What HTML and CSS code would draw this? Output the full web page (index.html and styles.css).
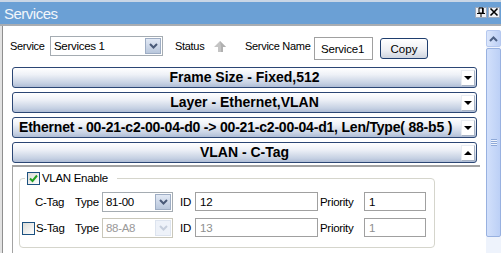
FILE: index.html
```html
<!DOCTYPE html>
<html lang="en">
<head>
    <meta charset="UTF-8">
    <title>Services</title>
    <link rel="stylesheet" href="styles.css">
</head>
<body>
    <div class="window">
        <div class="titlebar">
            <span class="title">Services</span>
            <div class="title-buttons">
                <span class="tbtn">
                    <svg width="10" height="10" viewBox="0 0 10 10">
                        <path d="M3 1h4v5H3z" fill="none" stroke="#000" stroke-width="1"/>
                        <path d="M6 1h1.5v5H6z" fill="#000"/>
                        <path d="M1 6.5h8" stroke="#000" stroke-width="1"/>
                        <path d="M5 7v3" stroke="#000" stroke-width="1"/>
                    </svg>
                </span>
                <span class="tbtn">
                    <svg width="10" height="10" viewBox="0 0 10 10">
                        <path d="M1.5 1.5l7 7M8.5 1.5l-7 7" stroke="#000" stroke-width="1.6"/>
                    </svg>
                </span>
            </div>
        </div>

        <div class="main">
            <div class="content">
                <div class="toolbar">
                    <span class="lbl lbl-service">Service</span>
                    <div class="combo combo-service">
                        <span class="combo-text">Services 1</span>
                        <span class="combo-btn">
                            <svg width="9" height="6" viewBox="0 0 9 6"><path d="M1 1l3.5 3.5L8 1" fill="none" stroke="currentColor" stroke-width="2"/></svg>
                        </span>
                    </div>
                    <span class="lbl lbl-status">Status</span>
                    <svg class="status-icon" width="13" height="12" viewBox="0 0 13 12">
                        <path d="M6 0L12 6H9V11H4V6H0z" fill="#c4c4c4"/>
                        <path d="M6 0L12 6H9V11H7V5z" fill="#b0b0b0"/>
                    </svg>
                    <span class="lbl lbl-name">Service Name</span>
                    <input class="field field-name" type="text" value="Service1">
                    <button class="btn-copy" type="button">Copy</button>
                </div>

                <div class="sections">
                    <div class="section-head">
                        <span class="section-title">Frame Size - Fixed,512</span>
                        <span class="section-arrow"><i class="tri-down"></i></span>
                    </div>
                    <div class="section-head">
                        <span class="section-title">Layer - Ethernet,VLAN</span>
                        <span class="section-arrow"><i class="tri-down"></i></span>
                    </div>
                    <div class="section-head">
                        <span class="section-title section-title-long">Ethernet - 00-21-c2-00-04-d0 -&gt; 00-21-c2-00-04-d1, Len/Type( 88-b5 )</span>
                        <span class="section-arrow"><i class="tri-down"></i></span>
                    </div>
                    <div class="section-head">
                        <span class="section-title">VLAN - C-Tag</span>
                        <span class="section-arrow"><i class="tri-up"></i></span>
                    </div>

                    <div class="section-body">
                        <fieldset class="group">
                            <legend class="group-legend">
                                <span class="check checked">
                                    <svg width="11" height="11" viewBox="0 0 11 11"><path d="M2 5.5l2.5 2.5L9 2.5" fill="none" stroke="#21a121" stroke-width="2"/></svg>
                                </span>
                                <span>VLAN Enable</span>
                            </legend>

                            <div class="tag-row">
                                <span></span>
                                <span class="lbl">C-Tag</span>
                                <span class="lbl">Type</span>
                                <div class="combo combo-type">
                                    <span class="combo-text">81-00</span>
                                    <span class="combo-btn">
                                        <svg width="9" height="6" viewBox="0 0 9 6"><path d="M1 1l3.5 3.5L8 1" fill="none" stroke="currentColor" stroke-width="2"/></svg>
                                    </span>
                                </div>
                                <span class="lbl lbl-id">ID</span>
                                <input class="field" type="text" value="12">
                                <span class="lbl lbl-prio">Priority</span>
                                <input class="field" type="text" value="1">
                            </div>

                            <div class="tag-row">
                                <span class="check"></span>
                                <span class="lbl lbl-stag">S-Tag</span>
                                <span class="lbl">Type</span>
                                <div class="combo combo-type disabled">
                                    <span class="combo-text">88-A8</span>
                                    <span class="combo-btn">
                                        <svg width="9" height="6" viewBox="0 0 9 6"><path d="M1 1l3.5 3.5L8 1" fill="none" stroke="currentColor" stroke-width="2"/></svg>
                                    </span>
                                </div>
                                <span class="lbl lbl-id">ID</span>
                                <input class="field" type="text" value="13" disabled>
                                <span class="lbl lbl-prio">Priority</span>
                                <input class="field" type="text" value="1" disabled>
                            </div>
                        </fieldset>
                    </div>
                </div>
            </div>

            <div class="scrollbar">
                <div class="sb-up">
                    <svg width="9" height="6" viewBox="0 0 9 6"><path d="M1 5l3.5-3.5L8 5" fill="none" stroke="#4d6185" stroke-width="2"/></svg>
                </div>
                <div class="sb-thumb"><span class="grip"></span></div>
            </div>
        </div>
    </div>
</body>
</html>
```

FILE: styles.css
```css
/* XP style docked "Services" panel */
* {
    box-sizing: border-box;
}

body {
    margin: 0;
    font-family: 'Liberation Sans', Arial, sans-serif;
    font-size: 11px;
    letter-spacing: -0.3px;
    color: #000;
    background-color: #fff;
    overflow: hidden;
}

.window {
    width: 501px;
    height: 253px;
    display: flex;
    flex-direction: column;
}

/* title bar */
.titlebar {
    height: 26px;
    flex-shrink: 0;
    display: flex;
    align-items: center;
    justify-content: space-between;
    background-color: #6ba0d5;
    border-top: 2px solid #c9d6e6;
    border-bottom: 2px solid #a9adb2;
    padding: 0 1px 0 4px;
}

.title {
    color: #f2f6fb;
    font-size: 15px;
    letter-spacing: -0.5px;
    margin-top: 1px;
}

.title-buttons {
    display: flex;
    gap: 1px;
    margin-bottom: 2px;
}

.tbtn {
    width: 12px;
    height: 11px;
    display: flex;
    align-items: center;
    justify-content: center;
    background-color: #eef1f6;
    border: 1px solid #9aa9be;
}

/* main area */
.main {
    flex: 1;
    display: flex;
    border-left: 2px solid #e2e2e2;
    min-height: 0;
}

.content {
    flex: 1;
    border-left: 1px solid #8f8f8f;
}

.lbl {
    line-height: 20px;
    white-space: nowrap;
}

.toolbar {
    display: flex;
    align-items: flex-start;
    margin-top: 10px;
    padding-left: 7px;
    height: 24px;
}

.lbl-service { width: 40px; }
.lbl-status { margin-left: 12px; width: 39px; }
.lbl-name { margin-left: 18px; width: 62px; }

.status-icon {
    margin-top: 5px;
}

/* combo box */
.combo {
    display: flex;
    height: 20px;
    border: 1px solid #a5acb2;
    background-color: #fff;
    padding: 1px;
}

.combo-service { width: 113px; }
.combo-type { width: 71px; }

.combo-text {
    flex: 1;
    line-height: 16px;
    padding-left: 2px;
    font-size: 11.5px;
}

.combo-btn {
    width: 16px;
    display: flex;
    align-items: center;
    justify-content: center;
    color: #4a5a78;
    background: linear-gradient(#e2e9f5, #b9c7dc);
    border: 1px solid #9eadc4;
}

.combo.disabled {
    border-color: #c9c7ba;
}

.combo.disabled .combo-text {
    color: #9a9a9a;
}

.combo.disabled .combo-btn {
    color: #c6cedc;
    background: #eef2f9;
    border-color: #dde4ef;
}

.field {
    height: 19px;
    border: 1px solid #a0a0a0;
    padding: 0 0 0 4px;
    font-family: inherit;
    font-size: 11.5px;
    letter-spacing: -0.2px;
    color: #000;
    background-color: #fff;
    outline: none;
}

.field:disabled {
    color: #8e8e8e;
    background-color: #fff;
}

.field-name {
    width: 59px;
    height: 23px;
    margin-left: 7px;
    margin-top: 1px;
    padding-left: 6px;
}

.btn-copy {
    width: 48px;
    height: 21px;
    margin-left: 7px;
    margin-top: 2px;
    font-family: inherit;
    font-size: 11.5px;
    border: 1px solid #1f3e6e;
    border-radius: 3px;
    background: linear-gradient(#ffffff, #eceef3 60%, #cfd5df);
    padding: 0;
}

/* accordion headers */
.sections {
    display: flex;
    flex-direction: column;
    gap: 4px;
    margin-top: 7px;
    padding: 0 9px;
}

.section-head {
    height: 21px;
    display: grid;
    align-items: center;
    border: 1px solid #2b4674;
    border-radius: 3px;
    background: linear-gradient(#ffffff, #eef1f7 35%, #c6d1e3 80%, #afbdd6);
    overflow: hidden;
}

.section-title,
.section-arrow {
    grid-area: 1 / 1;
}

.section-title {
    font-size: 14px;
    font-weight: bold;
    letter-spacing: 0;
    text-align: center;
    white-space: nowrap;
    padding: 0 6px;
    line-height: 19px;
}

.section-title-long {
    text-align: left;
    letter-spacing: -0.2px;
}

.section-arrow {
    justify-self: end;
    width: 14px;
    height: 16px;
    margin-right: 1px;
    display: flex;
    align-items: center;
    justify-content: center;
    background-color: #fff;
    border: 1px solid #e8ecf2;
    border-right-color: #a7b2c4;
    border-bottom-color: #a7b2c4;
}

.tri-down,
.tri-up {
    width: 0;
    height: 0;
    border-left: 4px solid transparent;
    border-right: 4px solid transparent;
}

.tri-down { border-top: 4px solid #000; }
.tri-up { border-bottom: 4px solid #000; }

/* VLAN content */
.section-body {
    margin-top: -2px;
    margin-right: -3px;
    height: 90px;
    border-top: 2px solid #a3a3a3;
    border-left: 1px solid #a3a3a3;
    padding: 5px 0 0 6px;
}

.group {
    width: fit-content;
    margin: 0;
    padding: 0 8px 9px 2px;
    border: 1px solid #d5d5cc;
    border-radius: 4px;
}

.group-legend {
    display: flex;
    align-items: center;
    gap: 2px;
    margin-left: 3px;
    padding: 0 9px 0 2px;
    line-height: 13px;
    font-size: 11.5px;
}

.check {
    width: 13px;
    height: 13px;
    display: flex;
    align-items: center;
    justify-content: center;
    border: 1px solid #1c5180;
    background: linear-gradient(135deg, #dcdcd7, #ffffff);
}

.tag-row {
    display: grid;
    grid-template-columns: 13px 40px 27px 71px 22px 123px 46px 62px;
    align-items: start;
    margin-top: 6px;
    font-size: 11.5px;
}

.tag-row:first-of-type {
    margin-top: 7px;
}

.tag-row .check {
    align-self: center;
}

.lbl-stag { padding-left: 1px; }
.lbl-id { padding-left: 7px; }
.lbl-prio { padding-left: 2px; }

/* scrollbar */
.scrollbar {
    width: 15px;
    margin-top: 4px;
    display: flex;
    flex-direction: column;
    background-color: #eef3fc;
}

.sb-up {
    height: 17px;
    display: flex;
    align-items: center;
    justify-content: center;
    border: 1px solid #b5c8ef;
    border-radius: 2px;
    background: linear-gradient(90deg, #dbe6fb, #bccff5);
}

.sb-thumb {
    height: 189px;
    margin-top: 1px;
    display: flex;
    align-items: center;
    justify-content: center;
    border: 1px solid #98b1e0;
    border-radius: 2px;
    background: linear-gradient(90deg, #d2e0fb, #bcd0f6);
}

.grip {
    width: 6px;
    height: 7px;
    background: repeating-linear-gradient(#8ea9d8 0 1px, #eef3fc 1px 2px);
}
```
